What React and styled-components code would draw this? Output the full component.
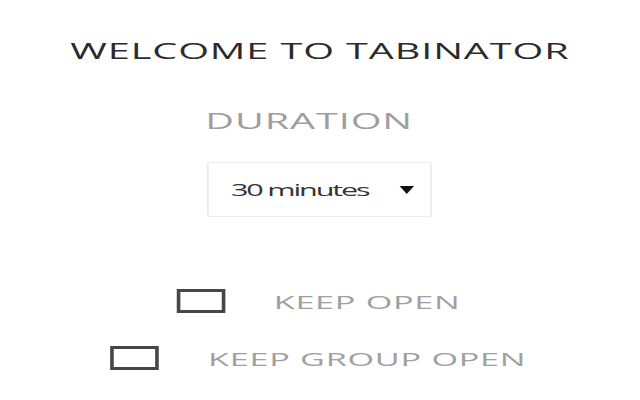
import React from "react";
import styled, { createGlobalStyle } from "styled-components";

const STRETCH = 1.8;

const Global = createGlobalStyle`
  html, body { margin: 0; padding: 0; background: #fff; overflow: hidden; }
  body { font-family: "Open Sans", "Liberation Sans", sans-serif; }
`;

/* The popup is shown stretched horizontally to fill the 640px window */
const Viewport = styled.div`
  width: ${640 / STRETCH}px;
  height: 400px;
  transform: scaleX(${STRETCH});
  transform-origin: 0 0;
`;

const Page = styled.div`
  height: 100%;
  display: flex;
  flex-direction: column;
  align-items: center;
  box-sizing: border-box;
  padding-top: 35px;
`;

const Title = styled.h1`
  margin: 0;
  font-size: 22px;
  font-weight: 400;
  color: #2b2b2b;
  line-height: 30px;
  letter-spacing: 0.5px;
  white-space: nowrap;
`;

const Label = styled.div`
  margin-top: 40px;
  margin-right: 12px;
  font-size: 22px;
  font-weight: 400;
  color: #9e9e9e;
  line-height: 30px;
  letter-spacing: 0.5px;
`;

const Select = styled.div`
  margin-top: 27px;
  width: 125px;
  height: 55px;
  box-sizing: border-box;
  border: 1px solid #ececec;
  border-radius: 2px;
  display: flex;
  align-items: center;
  justify-content: space-between;
  padding: 0 9px 0 12px;
  font-size: 17px;
  letter-spacing: -1.2px;
  color: #333;
  white-space: nowrap;
`;

const Arrow = styled.span`
  width: 0;
  height: 0;
  border-left: 4.2px solid transparent;
  border-right: 4.2px solid transparent;
  border-top: 8px solid #111;
`;

const Options = styled.div`
  margin-top: 71px;
  display: flex;
  flex-direction: column;
  align-items: center;
  gap: 31px;
`;

const Row = styled.label`
  display: flex;
  align-items: center;
  gap: 27px;
  transform: translateX(-0.8px);
`;

const Box = styled.span`
  width: 27px;
  height: 23.5px;
  box-sizing: border-box;
  border-style: solid;
  border-color: #474747;
  border-width: 3px 2.2px;
`;

const OptionText = styled.span`
  font-size: 19px;
  color: #a0a0a0;
  line-height: 24px;
  letter-spacing: 0.4px;
  white-space: nowrap;
  padding-top: 2px;
`;

export default function App() {
  return (
    <>
      <Global />
      <Viewport>
        <Page>
          <Title>WELCOME TO TABINATOR</Title>
          <Label>DURATION</Label>
          <Select>
            <span>30 minutes</span>
            <Arrow />
          </Select>
          <Options>
            <Row>
              <Box />
              <OptionText>KEEP OPEN</OptionText>
            </Row>
            <Row>
              <Box />
              <OptionText>KEEP GROUP OPEN</OptionText>
            </Row>
          </Options>
        </Page>
      </Viewport>
    </>
  );
}
